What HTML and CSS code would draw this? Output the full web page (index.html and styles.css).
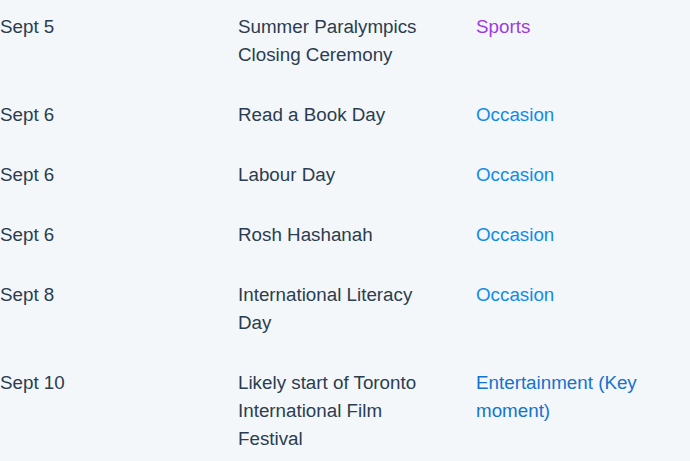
FILE: index.html
```html
<!DOCTYPE html>
<html>
<head>
<meta charset="utf-8">
<link rel="stylesheet" href="styles.css">
</head>
<body>
<div class="table">
  <div class="row"><div class="date">Sept 5</div><div class="event">Summer Paralympics Closing Ceremony</div><div class="cat sports">Sports</div></div>
  <div class="row"><div class="date">Sept 6</div><div class="event">Read a Book Day</div><div class="cat occasion">Occasion</div></div>
  <div class="row"><div class="date">Sept 6</div><div class="event">Labour Day</div><div class="cat occasion">Occasion</div></div>
  <div class="row"><div class="date">Sept 6</div><div class="event">Rosh Hashanah</div><div class="cat occasion">Occasion</div></div>
  <div class="row"><div class="date">Sept 8</div><div class="event">International Literacy Day</div><div class="cat occasion">Occasion</div></div>
  <div class="row"><div class="date">Sept 10</div><div class="event">Likely start of Toronto International Film Festival</div><div class="cat ent">Entertainment (Key moment)</div></div>
</div>
</body>
</html>
```
FILE: styles.css
```css
html, body {
  margin: 0;
  padding: 0;
  background: #f4f7fa;
}
body {
  font-family: "Liberation Sans", Arial, sans-serif;
  font-size: 18.8px;
  line-height: 28px;
  color: #2b3d4f;
  overflow: hidden;
}
.table {
  display: flex;
  flex-direction: column;
  gap: 32px;
  padding-top: 13px;
}
.row {
  display: grid;
  grid-template-columns: 238px 238px 1fr;
}
.row > div {
  padding-right: 30px;
}
.sports { color: #9d3be0; }
.occasion { color: #128be8; }
.ent { color: #1572d0; }
```
